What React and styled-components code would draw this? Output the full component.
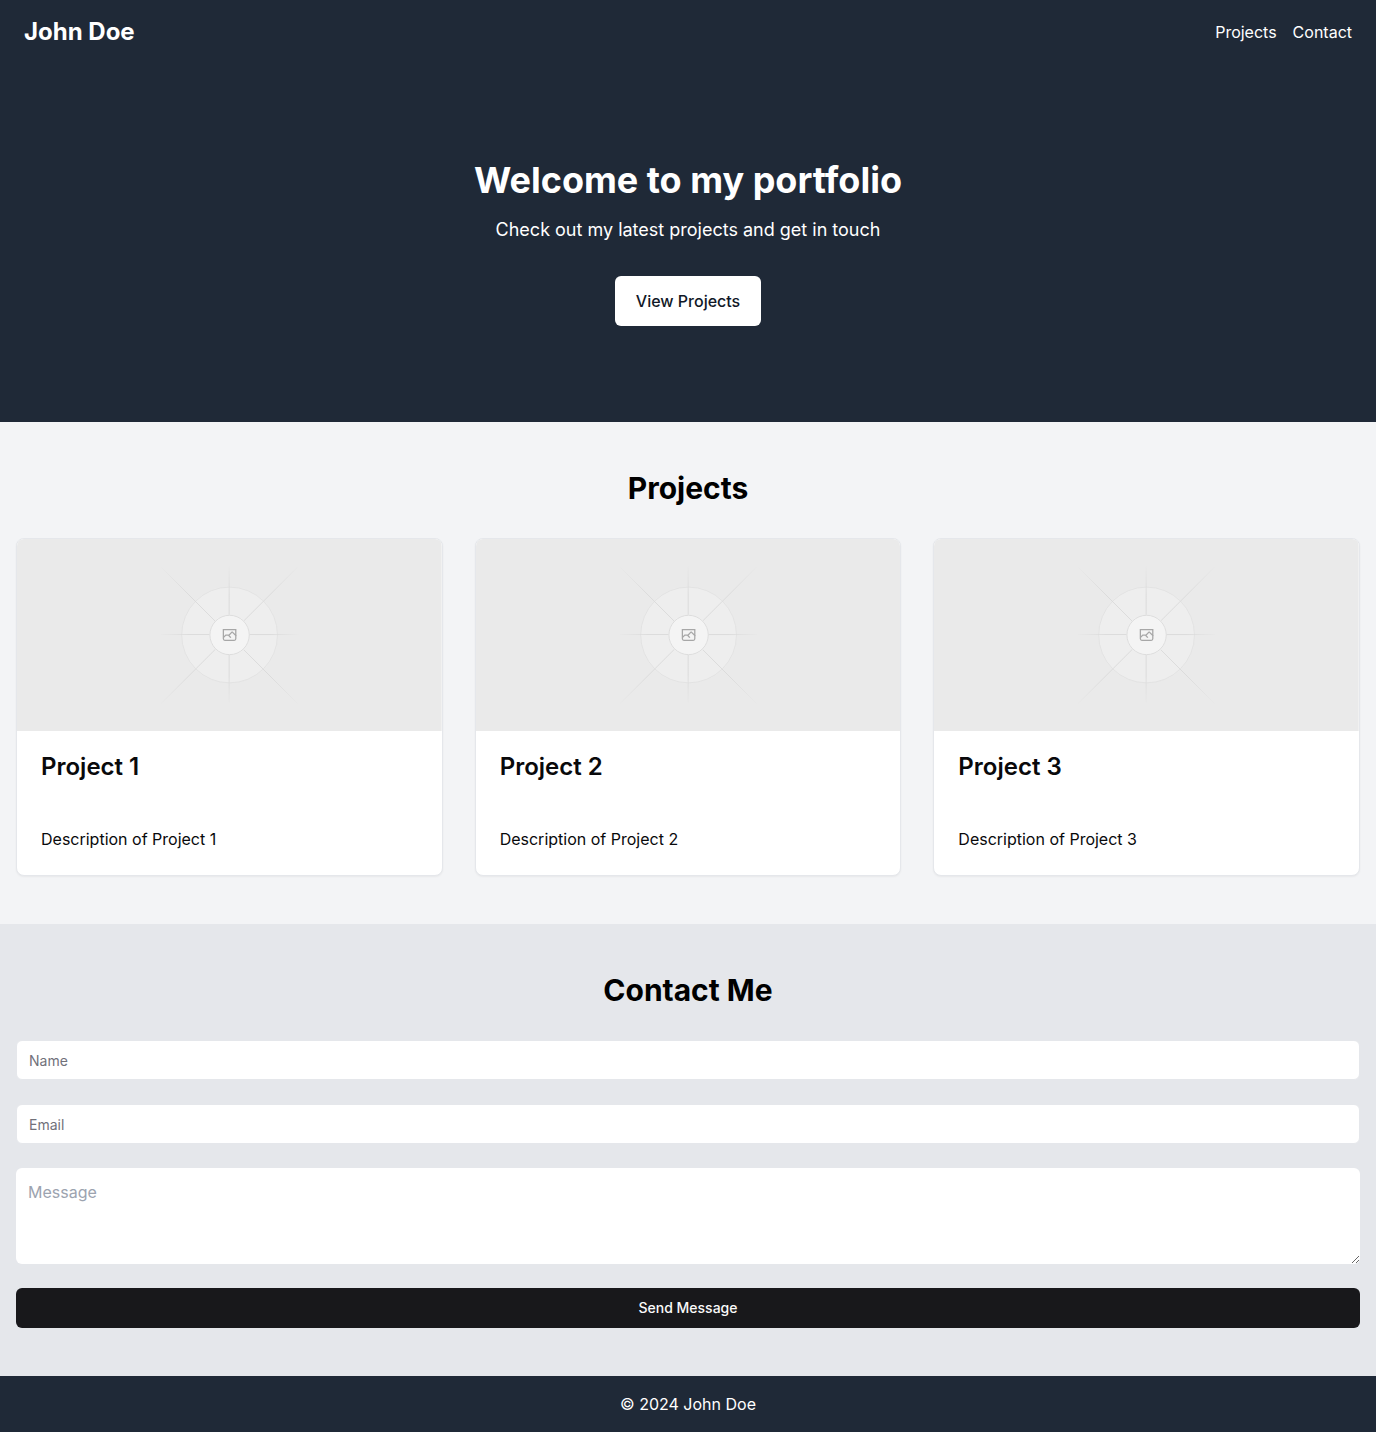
import React, { useId } from "react";
import styled, { createGlobalStyle } from "styled-components";

const GlobalStyle = createGlobalStyle`
  *, *::before, *::after { box-sizing: border-box; }
  body {
    margin: 0;
    background: #f3f4f6;
    color: #09090b;
    font-family: Inter, "Liberation Sans", sans-serif;
    font-size: 16px;
    line-height: 24px;
  }
  h1, h2, h3, p { margin: 0; }
`;

const Header = styled.header`
  display: flex;
  align-items: center;
  justify-content: space-between;
  padding: 16px 24px;
  background: #1f2937;
  color: #fff;
`;

const Brand = styled.h1`
  font-size: 24px;
  line-height: 32px;
  font-weight: 700;
`;

const Nav = styled.nav`
  display: flex;
  gap: 16px;
`;

const NavLink = styled.a`
  color: inherit;
  text-decoration: none;
`;

const Hero = styled.section`
  display: flex;
  flex-direction: column;
  align-items: center;
  padding: 96px 16px;
  background: #1f2937;
  color: #fff;
  text-align: center;
`;

const HeroTitle = styled.h2`
  font-size: 36px;
  line-height: 40px;
  font-weight: 700;
`;

const HeroText = styled.p`
  margin-top: 16px;
  font-size: 18px;
  line-height: 28px;
`;

const HeroButton = styled.button`
  margin-top: 32px;
  padding: 12px 20px;
  border: 1px solid transparent;
  border-radius: 6px;
  background: #fff;
  color: #111827;
  font: inherit;
  font-weight: 500;
  cursor: pointer;
`;

const Section = styled.section`
  padding: 48px 16px;
  background: ${({ $background }) => $background};
`;

const SectionTitle = styled.h2`
  margin-bottom: 32px;
  color: #000;
  font-size: 30px;
  line-height: 36px;
  font-weight: 700;
  text-align: center;
`;

const ProjectGrid = styled.div`
  display: grid;
  grid-template-columns: repeat(3, minmax(0, 1fr));
  gap: 32px;

  @media (max-width: 767px) {
    grid-template-columns: minmax(0, 1fr);
  }
`;

const Card = styled.article`
  overflow: hidden;
  border: 1px solid #e5e7eb;
  border-radius: 8px;
  background: #fff;
  box-shadow: 0 1px 2px rgba(0, 0, 0, 0.05);
`;

const CardImage = styled.svg`
  display: block;
  width: 100%;
  height: 192px;
`;

const CardHeader = styled.div`
  padding: 24px;
`;

const CardTitle = styled.h3`
  font-size: 24px;
  line-height: 24px;
  font-weight: 600;
`;

const CardBody = styled.div`
  padding: 24px;
`;

const Form = styled.form`
  display: flex;
  flex-direction: column;
  gap: 24px;
`;

const TextInput = styled.input`
  width: 100%;
  height: 40px;
  padding: 8px 12px;
  border: 1px solid #e5e7eb;
  border-radius: 6px;
  background: #fff;
  color: inherit;
  font: inherit;
  font-size: 14px;
  line-height: 20px;

  &::placeholder { color: #71717a; opacity: 1; }
`;

const TextArea = styled.textarea`
  display: block;
  width: 100%;
  padding: 12px;
  border: 0;
  border-radius: 6px;
  background: #fff;
  color: inherit;
  font: inherit;
  resize: vertical;

  &::placeholder { color: #9ca3af; opacity: 1; }
`;

const SubmitButton = styled.button`
  height: 40px;
  padding: 8px 16px;
  border: 0;
  border-radius: 6px;
  background: #18181b;
  color: #fafafa;
  font: inherit;
  font-size: 14px;
  line-height: 20px;
  font-weight: 500;
  cursor: pointer;
`;

const Footer = styled.footer`
  padding: 16px;
  background: #1f2937;
  color: #fff;
  text-align: center;
`;

function FadeGradient({ id, x1, y1, x2, y2 }) {
  return (
    <linearGradient id={id} x1={x1} y1={y1} x2={x2} y2={y2} gradientUnits="userSpaceOnUse">
      <stop stopColor="#c9c9c9" stopOpacity="0" />
      <stop offset="0.208" stopColor="#c9c9c9" />
      <stop offset="0.792" stopColor="#c9c9c9" />
      <stop offset="1" stopColor="#c9c9c9" stopOpacity="0" />
    </linearGradient>
  );
}

const spokes = [
  { x1: 404.5, y1: 796.5, x2: 796, y2: 405 },
  { x1: 404.8, y1: 598.6, x2: 796.6, y2: 598.7 },
  { x1: 599.5, y1: 795.7, x2: 599.6, y2: 404 },
  { x1: 795.7, y1: 796.6, x2: 404.3, y2: 405.2 },
];

function Placeholder({ label }) {
  const id = useId().replace(/[^a-zA-Z0-9]/g, "");
  return (
    <CardImage viewBox="0 0 1200 1200" preserveAspectRatio="xMidYMid slice" fill="none" role="img" aria-label={label}>
      <defs>
        {spokes.map((s, i) => (
          <FadeGradient key={i} id={`${id}s${i}`} {...s} />
        ))}
      </defs>
      <rect width="1200" height="1200" fill="#eaeaea" />
      <g opacity="0.5">
        <g opacity="0.5">
          <circle cx="600.7" cy="599.9" r="136.6" fill="#fafafa" />
          <circle cx="600.7" cy="599.9" r="135.4" stroke="#c9c9c9" strokeWidth="2.418" />
        </g>
        {spokes.map((s, i) => (
          <line key={i} {...s} stroke={`url(#${id}s${i})`} strokeWidth="2.418" />
        ))}
        <circle cx="600.7" cy="599.9" r="56.8" fill="#fff" />
        <path
          fill="#666"
          fillRule="evenodd"
          clipRule="evenodd"
          d="M616.426 586.58h-31.434v16.176l3.553-3.554.531-.531h9.068l.074-.074 8.463-8.463h2.565l7.18 7.181V586.58zm-15.715 14.654 3.698 3.699 1.283 1.282-2.565 2.565-1.282-1.283-5.2-5.199h-6.066l-5.514 5.514-.073.073v2.876a2.418 2.418 0 0 0 2.418 2.418h26.598a2.418 2.418 0 0 0 2.418-2.418v-8.317l-8.463-8.463-7.181 7.181-.071.072zm-19.347 5.442v4.085a6.045 6.045 0 0 0 6.046 6.045h26.598a6.044 6.044 0 0 0 6.045-6.045v-7.108l1.356-1.355-1.282-1.283-.074-.073v-17.989h-38.689v23.43l-.146.146.146.147z"
        />
        <circle cx="600.7" cy="599.9" r="55.6" stroke="#c9c9c9" strokeWidth="2.418" />
      </g>
    </CardImage>
  );
}

const projects = [1, 2, 3].map((n) => ({
  title: `Project ${n}`,
  description: `Description of Project ${n}`,
}));

export default function App() {
  return (
    <>
      <GlobalStyle />
      <Header>
        <Brand>John Doe</Brand>
        <Nav>
          <NavLink href="#projects">Projects</NavLink>
          <NavLink href="#contact">Contact</NavLink>
        </Nav>
      </Header>
      <main>
        <Hero>
          <HeroTitle>Welcome to my portfolio</HeroTitle>
          <HeroText>Check out my latest projects and get in touch</HeroText>
          <HeroButton type="button">View Projects</HeroButton>
        </Hero>
        <Section id="projects" $background="#f3f4f6">
          <SectionTitle>Projects</SectionTitle>
          <ProjectGrid>
            {projects.map((p) => (
              <Card key={p.title}>
                <Placeholder label={p.title} />
                <CardHeader>
                  <CardTitle>{p.title}</CardTitle>
                </CardHeader>
                <CardBody>
                  <p>{p.description}</p>
                </CardBody>
              </Card>
            ))}
          </ProjectGrid>
        </Section>
        <Section id="contact" $background="#e5e7eb">
          <SectionTitle>Contact Me</SectionTitle>
          <Form onSubmit={(e) => e.preventDefault()}>
            <TextInput type="text" name="name" aria-label="Name" placeholder="Name" />
            <TextInput type="email" name="email" aria-label="Email" placeholder="Email" />
            <TextArea name="message" rows={3} aria-label="Message" placeholder="Message" />
            <SubmitButton type="submit">Send Message</SubmitButton>
          </Form>
        </Section>
      </main>
      <Footer>© 2024 John Doe</Footer>
    </>
  );
}
